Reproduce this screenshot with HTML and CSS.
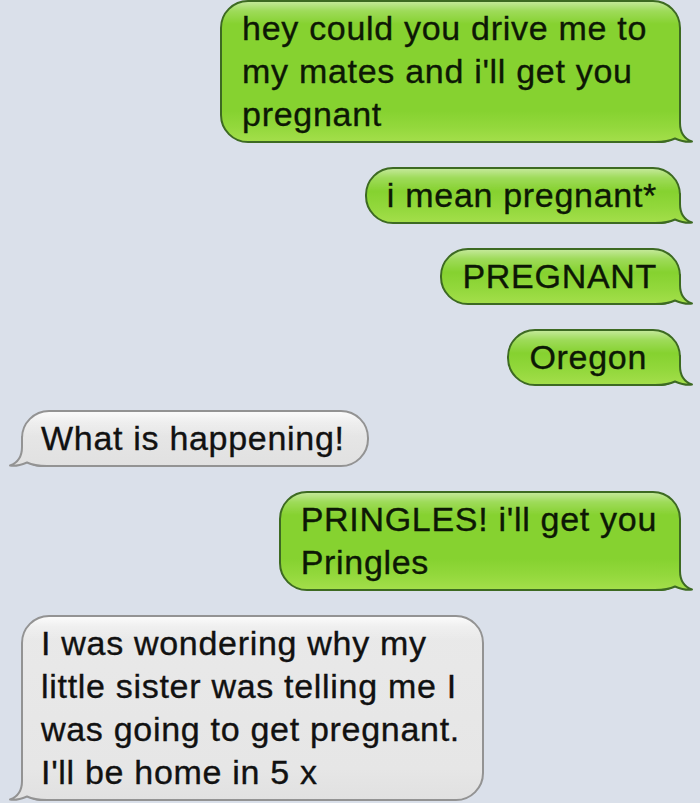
FILE: index.html
```html
<!DOCTYPE html>
<html lang="en">
<head>
<meta charset="utf-8">
<title>Messages</title>
<link rel="stylesheet" href="styles.css">
</head>
<body>
<svg class="defs" width="0" height="0" aria-hidden="true">
  <defs>
    <linearGradient id="gSent" gradientUnits="userSpaceOnUse" x1="0" y1="28" x2="0" y2="-2">
      <stop offset="0" stop-color="#a3de4a"/>
      <stop offset="0.467" stop-color="#93d83c"/>
      <stop offset="1" stop-color="#86d230"/>
    </linearGradient>
    <linearGradient id="gRecv" gradientUnits="userSpaceOnUse" x1="0" y1="28" x2="0" y2="-2">
      <stop offset="0" stop-color="#e1e1e1"/>
      <stop offset="1" stop-color="#e6e6e6"/>
    </linearGradient>
  </defs>
</svg>
<main class="thread">
  <div class="bubble sent wide"><span class="text">hey could you drive me to<br>my mates and i'll get you<br>pregnant</span>
    <svg class="tail" viewBox="0 0 40 30" width="40" height="30" aria-hidden="true">
      <path class="tail-fill" d="M0 0 L25 0 L25 10 C25 20 30 26 37 28.5 C32 29.5 26 28 20 25.5 C15 28 9 29 0 29 Z"/>
      <path class="tail-bg" d="M6 30 C12 29.6 16 27.6 20 25.5 C26 28 32 29.5 38 29 L40 31 L6 31 Z"/>
      <path class="tail-line" d="M25 0 L25 10 C25 20 30 26 37 28.5 C32 29.5 26 28 20 25.5 C15 28 9 29 0 29"/>
    </svg>
  </div>
  <div class="bubble sent"><span class="text">i mean pregnant*</span>
    <svg class="tail" viewBox="0 0 40 30" width="40" height="30" aria-hidden="true">
      <path class="tail-fill" d="M0 0 L25 0 L25 10 C25 20 30 26 37 28.5 C32 29.5 26 28 20 25.5 C15 28 9 29 0 29 Z"/>
      <path class="tail-bg" d="M6 30 C12 29.6 16 27.6 20 25.5 C26 28 32 29.5 38 29 L40 31 L6 31 Z"/>
      <path class="tail-line" d="M25 0 L25 10 C25 20 30 26 37 28.5 C32 29.5 26 28 20 25.5 C15 28 9 29 0 29"/>
    </svg>
  </div>
  <div class="bubble sent"><span class="text">PREGNANT</span>
    <svg class="tail" viewBox="0 0 40 30" width="40" height="30" aria-hidden="true">
      <path class="tail-fill" d="M0 0 L25 0 L25 10 C25 20 30 26 37 28.5 C32 29.5 26 28 20 25.5 C15 28 9 29 0 29 Z"/>
      <path class="tail-bg" d="M6 30 C12 29.6 16 27.6 20 25.5 C26 28 32 29.5 38 29 L40 31 L6 31 Z"/>
      <path class="tail-line" d="M25 0 L25 10 C25 20 30 26 37 28.5 C32 29.5 26 28 20 25.5 C15 28 9 29 0 29"/>
    </svg>
  </div>
  <div class="bubble sent wide"><span class="text">Oregon</span>
    <svg class="tail" viewBox="0 0 40 30" width="40" height="30" aria-hidden="true">
      <path class="tail-fill" d="M0 0 L25 0 L25 10 C25 20 30 26 37 28.5 C32 29.5 26 28 20 25.5 C15 28 9 29 0 29 Z"/>
      <path class="tail-bg" d="M6 30 C12 29.6 16 27.6 20 25.5 C26 28 32 29.5 38 29 L40 31 L6 31 Z"/>
      <path class="tail-line" d="M25 0 L25 10 C25 20 30 26 37 28.5 C32 29.5 26 28 20 25.5 C15 28 9 29 0 29"/>
    </svg>
  </div>
  <div class="bubble received"><span class="text">What is happening!</span>
    <svg class="tail" viewBox="0 0 40 30" width="40" height="30" aria-hidden="true">
      <path class="tail-fill" d="M0 0 L25 0 L25 10 C25 20 30 26 37 28.5 C32 29.5 26 28 20 25.5 C15 28 9 29 0 29 Z"/>
      <path class="tail-bg" d="M6 30 C12 29.6 16 27.6 20 25.5 C26 28 32 29.5 38 29 L40 31 L6 31 Z"/>
      <path class="tail-line" d="M25 0 L25 10 C25 20 30 26 37 28.5 C32 29.5 26 28 20 25.5 C15 28 9 29 0 29"/>
    </svg>
  </div>
  <div class="bubble sent"><span class="text">PRINGLES! i'll get you<br>Pringles</span>
    <svg class="tail" viewBox="0 0 40 30" width="40" height="30" aria-hidden="true">
      <path class="tail-fill" d="M0 0 L25 0 L25 10 C25 20 30 26 37 28.5 C32 29.5 26 28 20 25.5 C15 28 9 29 0 29 Z"/>
      <path class="tail-bg" d="M6 30 C12 29.6 16 27.6 20 25.5 C26 28 32 29.5 38 29 L40 31 L6 31 Z"/>
      <path class="tail-line" d="M25 0 L25 10 C25 20 30 26 37 28.5 C32 29.5 26 28 20 25.5 C15 28 9 29 0 29"/>
    </svg>
  </div>
  <div class="bubble received"><span class="text">I was wondering why my<br>little sister was telling me I<br>was going to get pregnant.<br>I'll be home in 5 x</span>
    <svg class="tail" viewBox="0 0 40 30" width="40" height="30" aria-hidden="true">
      <path class="tail-fill" d="M0 0 L25 0 L25 10 C25 20 30 26 37 28.5 C32 29.5 26 28 20 25.5 C15 28 9 29 0 29 Z"/>
      <path class="tail-bg" d="M6 30 C12 29.6 16 27.6 20 25.5 C26 28 32 29.5 38 29 L40 31 L6 31 Z"/>
      <path class="tail-line" d="M25 0 L25 10 C25 20 30 26 37 28.5 C32 29.5 26 28 20 25.5 C15 28 9 29 0 29"/>
    </svg>
  </div>
</main>
</body>
</html>
```

FILE: styles.css
```css
html, body {
  margin: 0;
  padding: 0;
  background: #dae0ea;
  height: 803px;
  overflow: hidden;
}

body {
  font-family: "Liberation Sans", Arial, Helvetica, sans-serif;
  color: #111;
}

.defs {
  display: block;
  width: 0;
  height: 0;
}

.thread {
  display: flex;
  flex-direction: column;
  gap: 24px;
  padding: 0 19px 0 21px;
}

.bubble {
  position: relative;
  font-size: 34px;
  line-height: 43px;
  letter-spacing: 0.7px;
  border: 2px solid;
  border-radius: 28px;
  padding: 5px 22px 5px 20px;
  white-space: nowrap;
  -webkit-text-stroke: 0.35px currentColor;
}

.text {
  position: relative;
  z-index: 1;
}

.sent {
  align-self: flex-end;
  border-color: #3d6a22;
  border-bottom-right-radius: 16px;
  color: #0d1805;
  background:
    linear-gradient(to bottom, rgba(255, 255, 255, 0.5) 0px, rgba(255, 255, 255, 0.2) 9px, rgba(255, 255, 255, 0) 22px),
    linear-gradient(to top, #a3de4a 0px, #93d83c 14px, #86d230 30px, #86d230 100%);
}

.sent.wide {
  padding-right: 32px;
}

.received {
  align-self: flex-start;
  border-color: #939393;
  border-bottom-left-radius: 16px;
  padding: 5px 22px 5px 18px;
  background:
    linear-gradient(to bottom, rgba(255, 255, 255, 0.8) 0px, rgba(255, 255, 255, 0.3) 10px, rgba(255, 255, 255, 0) 24px),
    linear-gradient(to top, #e1e1e1 0px, #e6e6e6 30px, #e9e9e9 100%);
}

.tail {
  position: absolute;
  bottom: -2px;
  right: -16px;
  width: 40px;
  height: 30px;
  overflow: visible;
}

.received .tail {
  right: auto;
  left: -16px;
  transform: scaleX(-1);
}

.tail-bg {
  fill: #dae0ea;
}

.tail-line {
  fill: none;
  stroke-width: 2;
  stroke-linejoin: round;
  stroke-linecap: round;
}

.sent .tail-fill { fill: url(#gSent); }
.sent .tail-line { stroke: #3d6a22; }

.received .tail-fill { fill: url(#gRecv); }
.received .tail-line { stroke: #939393; }
```
